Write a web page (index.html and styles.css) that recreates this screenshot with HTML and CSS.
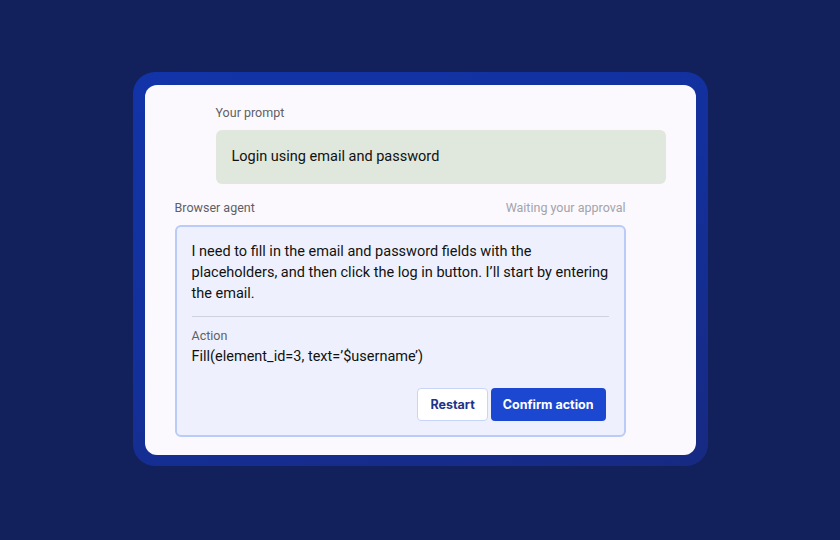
FILE: index.html
```html
<!DOCTYPE html>
<html lang="en">
<head>
    <meta charset="UTF-8">
    <title>Browser agent</title>
    <link rel="stylesheet" href="styles.css">
</head>
<body>
    <div class="frame">
        <div class="card">
            <div class="prompt">
                <div class="label">Your prompt</div>
                <div class="prompt-box">Login using email and password</div>
            </div>

            <div class="agent">
                <div class="agent-head">
                    <span class="label">Browser agent</span>
                    <span class="status">Waiting your approval</span>
                </div>
                <div class="agent-box">
                    <p class="thought">I need to fill in the email and password fields with the placeholders, and then click the log in button. I’ll start by entering the email.</p>
                    <hr class="divider">
                    <div class="label">Action</div>
                    <div class="action">Fill(element_id=3, text=’$username’)</div>
                    <div class="buttons">
                        <button class="btn btn-light">Restart</button>
                        <button class="btn btn-primary">Confirm action</button>
                    </div>
                </div>
            </div>
        </div>
    </div>
</body>
</html>
```

FILE: styles.css
```css
html, body {
    margin: 0;
    height: 100%;
}
body {
    background-color: #12215c;
    font-family: Roboto, "Noto Sans", sans-serif;
    display: flex;
    justify-content: center;
    align-items: flex-start;
    box-sizing: border-box;
    padding-top: 72px;
}
.frame {
    width: 551px;
    padding: 13px 12px 11px 12px;
    border-radius: 22px;
    background: linear-gradient(160deg, #1234a8 0%, #13309c 45%, #172a82 100%);
}
.card {
    background-color: #fbf9fe;
    border-radius: 12px;
    padding: 20px 30px 18px 30px;
}
.label {
    font-size: 12.5px;
    line-height: 16px;
    color: #5f5f66;
}
.prompt {
    margin-left: 41px;
}
.prompt-box {
    margin-top: 9px;
    background-color: #e0e7dc;
    border-radius: 6px;
    padding: 16px;
    font-size: 14.5px;
    line-height: 22px;
    color: #111;
}
.agent {
    margin-top: 16px;
    margin-right: 40px;
}
.agent-head {
    display: flex;
    justify-content: space-between;
}
.status {
    font-size: 12.5px;
    line-height: 16px;
    color: #a3a3aa;
}
.agent-box {
    margin-top: 9px;
    border: 2px solid #b9cbf6;
    border-radius: 6px;
    background-color: #eef1fd;
    padding: 14px 15px 14px 15px;
}
.thought {
    margin: 0;
    font-size: 14.5px;
    line-height: 21px;
    color: #111;
}
.divider {
    border: none;
    border-top: 1px solid #cfd3df;
    margin: 12px 0 11px 0;
}
.action {
    margin-top: 2px;
    font-size: 14.5px;
    line-height: 21px;
    color: #111;
}
.buttons {
    display: flex;
    justify-content: flex-end;
    gap: 3px;
    margin-top: 21px;
    margin-right: 3px;
}
.btn {
    font-family: Inter, "Noto Sans", sans-serif;
    font-weight: 700;
    font-size: 12.5px;
    height: 33px;
    border-radius: 4px;
    cursor: pointer;
}
.btn-light {
    background-color: #fff;
    color: #1c348c;
    border: 1px solid #c9d5f6;
    padding: 0 12px;
}
.btn-primary {
    background-color: #1c47d1;
    color: #fff;
    border: none;
    padding: 0 12px;
}
```
